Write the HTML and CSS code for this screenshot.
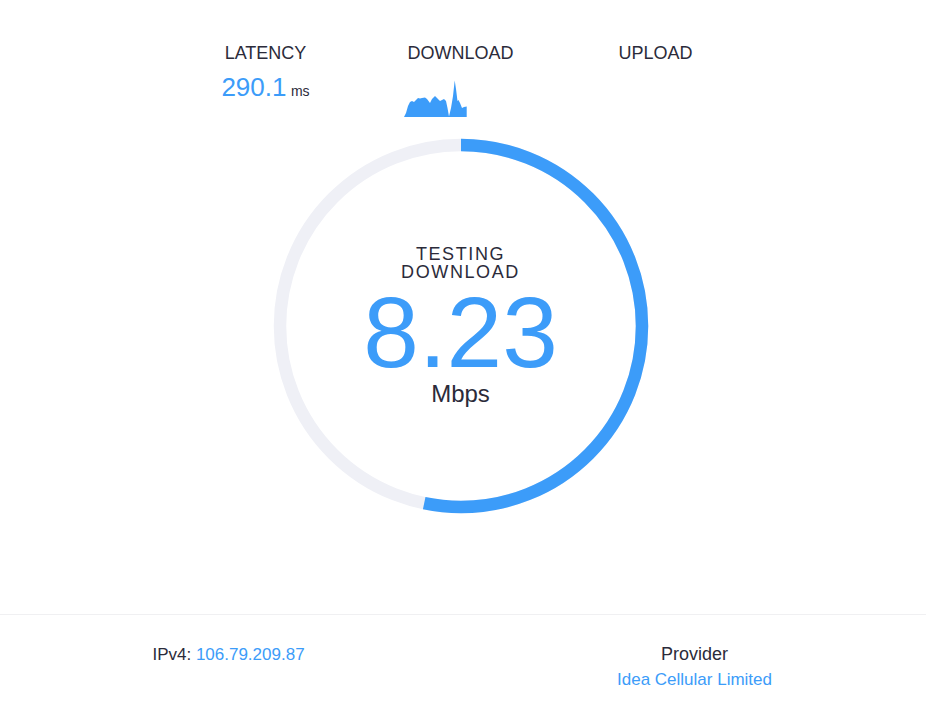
FILE: index.html
```html
<!DOCTYPE html>
<html lang="en">
<head>
<meta charset="utf-8">
<title>Speed Test</title>
<link rel="stylesheet" href="styles.css">
</head>
<body>
<div class="page">
  <main class="main">
    <section class="stats">
      <div class="stat">
        <div class="stat-label">LATENCY</div>
        <div class="stat-value"><span class="num">290.1</span> <span class="unit">ms</span></div>
      </div>
      <div class="stat">
        <div class="stat-label">DOWNLOAD</div>
        <div class="stat-value">
          <svg class="spark" width="114" height="46" viewBox="0 0 114 46" aria-hidden="true">
            <path fill="#3c9cf9" d="M0 45 L2 41 L4 34 L6 30 L8 29 L10 30 L12 28 L14 26 L16 26.5 L18 26 L21 25.5 L23 27 L26 31 L28 27 L31 24 L33 26 L36 29 L38 28 L40 27 L42 29 L43.5 36 L45 44.5 L47 36 L49 24 L50.7 8.5 L52 17 L53.5 29 L54.5 28 L56 31 L58 36 L60 35 L62.7 34.5 L62.7 45 Z"/>
          </svg>
        </div>
      </div>
      <div class="stat">
        <div class="stat-label">UPLOAD</div>
        <div class="stat-value"></div>
      </div>
    </section>

    <section class="gauge">
      <svg class="ring" width="376" height="376" viewBox="0 0 376 376" aria-hidden="true">
        <circle cx="188" cy="188" r="181" fill="none" stroke="#eff0f6" stroke-width="12.5"/>
        <circle cx="188" cy="188" r="181" fill="none" stroke="#3c9cf9" stroke-width="12.5" stroke-dasharray="605.5 1137.3" transform="rotate(-90 188 188)"/>
      </svg>
      <div class="gauge-text">
        <div class="gauge-label">TESTING</div>
        <div class="gauge-label">DOWNLOAD</div>
        <div class="gauge-num">8.23</div>
        <div class="gauge-unit">Mbps</div>
      </div>
    </section>
  </main>

  <footer class="footer">
    <div class="foot-col foot-ip">IPv4: <span class="link">106.79.209.87</span></div>
    <div class="foot-col">
      <div class="foot-title">Provider</div>
      <div class="foot-value link">Idea Cellular Limited</div>
    </div>
  </footer>
</div>
</body>
</html>
```

FILE: styles.css
```css
html, body {
  margin: 0;
  padding: 0;
  background: #ffffff;
}

body {
  font-family: "Liberation Sans", Arial, sans-serif;
  color: #2b2b3a;
}

.page {
  width: 926px;
}

.main {
  width: 921px;
  display: flex;
  flex-direction: column;
  align-items: center;
}

.stats {
  display: grid;
  grid-template-columns: repeat(3, 195px);
  padding-top: 43px;
}

.stat {
  display: flex;
  flex-direction: column;
  align-items: center;
}

.stat-label {
  font-size: 18px;
  line-height: 21px;
}

.stat-value {
  height: 46px;
  margin-top: 8px;
  color: #3c9cf9;
  line-height: 30px;
  white-space: nowrap;
}

.stat-value .num {
  font-size: 26px;
}

.stat-value .unit {
  font-size: 14px;
  color: #2b2b3a;
}

.spark {
  display: block;
}

.gauge {
  display: grid;
  margin-top: 20px;
}

.ring {
  grid-area: 1 / 1;
  display: block;
}

.gauge-text {
  grid-area: 1 / 1;
  align-self: start;
  padding-top: 107px;
  text-align: center;
}

.gauge-label {
  font-size: 18px;
  line-height: 18px;
  letter-spacing: 1.6px;
}

.gauge-num {
  margin-top: 4px;
  font-size: 100px;
  line-height: 95px;
  color: #3c9cf9;
}

.gauge-unit {
  font-size: 24px;
  line-height: 28px;
}

.footer {
  margin-top: 100px;
  border-top: 1px solid #f0f0f2;
  display: grid;
  grid-template-columns: 1fr 1fr;
  padding-top: 28px;
  padding-bottom: 36px;
}

.foot-col {
  text-align: center;
}

.foot-ip {
  font-size: 17px;
  line-height: 20px;
  padding-top: 2px;
  padding-right: 6px;
}

.foot-title {
  font-size: 18px;
  line-height: 22px;
}

.foot-value {
  font-size: 17px;
  line-height: 30px;
}

.link {
  color: #3c9cf9;
}
```
